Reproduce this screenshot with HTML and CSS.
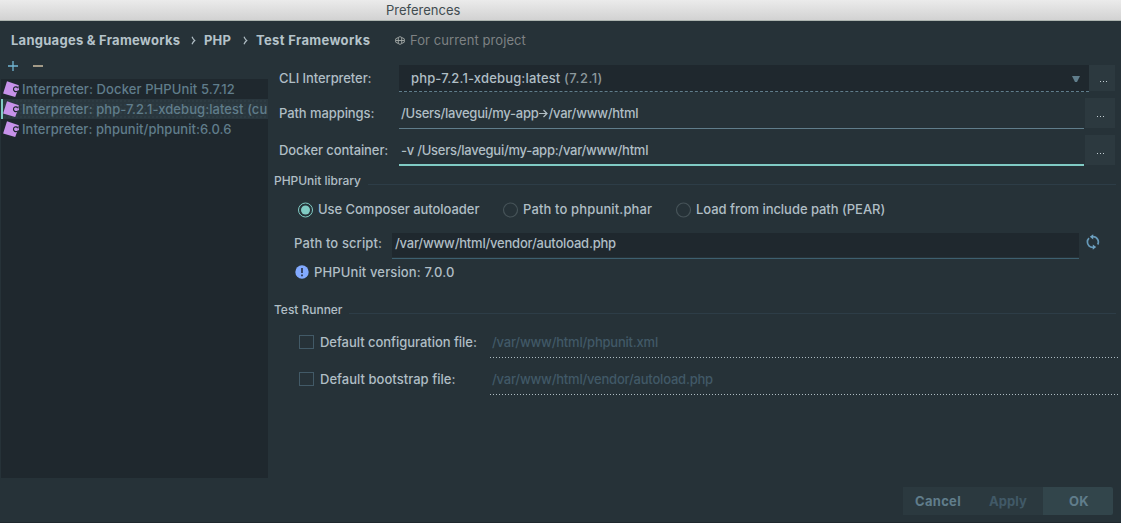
FILE: index.html
```html
<!DOCTYPE html>
<html lang="en">
<head>
<meta charset="utf-8">
<title>Preferences</title>
<link rel="stylesheet" href="styles.css">
</head>
<body>
<svg width="0" height="0" class="defs" aria-hidden="true">
  <symbol id="tag" viewBox="0 0 16 16">
    <path d="M4 .2 15.800 4.200 15.300 6.200 14.200 5.800 11 6v4.300l3.200.2L12.200 16 .1 12.600z" fill="#c792ea"/>
    <path d="M14.800 6.400c-2.200-1.300-4.300-.2-4.300 1.800s2 3.100 4 2.100" fill="#c792ea" stroke="#1f282e" stroke-width="1.200"/>
    <path d="M15.800 6.500v2.300h-2.600" fill="none" stroke="#c792ea" stroke-width="1.100"/>
  </symbol>
</svg>
<div class="window">
  <header class="titlebar"><span>Preferences</span></header>
  <nav class="crumbs">
    <b class="c1">Languages &amp; Frameworks</b>
    <svg class="chev" viewBox="0 0 5 9"><path d="M1 .7q1.2 2.7 2.7 3.800Q2.200 5.600 1 8.300"/></svg>
    <b class="c2">PHP</b>
    <svg class="chev" viewBox="0 0 5 9"><path d="M1 .7q1.2 2.7 2.7 3.800Q2.200 5.600 1 8.300"/></svg>
    <b class="c3">Test Frameworks</b>
    <svg class="scope" viewBox="0 0 10 9"><path d="M5 .6 9.300 2.800v3.400L5 8.400.7 6.200V2.800zM.7 4.500h8.600M3.300 1.800v5.400M6.700 1.800v5.400"/></svg>
    <span class="project">For current project</span>
  </nav>
  <div class="body">
    <aside class="side">
      <div class="tools">
        <svg viewBox="0 0 40 12"><path d="M0 6h10M5 1v10" stroke="#71b6d3" stroke-width="1.3"/><path d="M25 6h10" stroke="#a39b88" stroke-width="2"/></svg>
      </div>
      <div class="list">
        <div class="item"><svg><use href="#tag"/></svg><span class="i1">Interpreter: Docker PHPUnit 5.7.12</span></div>
        <div class="item selected"><svg><use href="#tag"/></svg><span class="i2">Interpreter: php-7.2.1-xdebug:latest (cu</span></div>
        <div class="item"><svg><use href="#tag"/></svg><span class="i3">Interpreter: phpunit/phpunit:6.0.6</span></div>
      </div>
    </aside>
    <main class="main">
      <div class="row cli"><label class="l1">CLI Interpreter:</label>
        <div class="combo"><span class="php">php-7.2.1-xdebug:latest <i>(7.2.1)</i></span><svg class="arrow" viewBox="0 0 8 6"><path d="M0 0h8L5 6H3z"/></svg></div>
        <div class="more"><i></i><i></i><i></i></div></div>
      <div class="row map"><label class="l2">Path mappings:</label>
        <div class="line"><span class="mapping">/Users/lavegui/my-app<svg viewBox="0 0 9 9"><path d="M0 4.500h7.700M4.500 1 8 4.500 4.500 8"/></svg>/var/www/html</span></div>
        <div class="more"><i></i><i></i><i></i></div></div>
      <div class="row docker"><label class="l3">Docker container:</label>
        <div class="line focus"><span class="volume">-v /Users/lavegui/my-app:/var/www/html</span></div>
        <div class="more"><i></i><i></i><i></i></div></div>

      <div class="section lib"><span class="s1">PHPUnit library</span><hr></div>
      <div class="radios">
        <div class="opt o1"><svg viewBox="0 0 16 16"><circle cx="8.500" cy="8" r="7" fill="none" stroke="#80cbc4"/><circle cx="8.500" cy="8" r="4.500" fill="#80cbc4"/></svg><span class="r1">Use Composer autoloader</span></div>
        <div class="opt o2"><svg viewBox="0 0 16 16"><circle cx="8.500" cy="8" r="7" fill="none" stroke="#465358" stroke-width="1.200"/></svg><span class="r2">Path to phpunit.phar</span></div>
        <div class="opt"><svg viewBox="0 0 16 16"><circle cx="8.500" cy="8" r="7" fill="none" stroke="#465358" stroke-width="1.200"/></svg><span class="r3">Load from include path (PEAR)</span></div>
      </div>
      <div class="script"><label class="l4">Path to script:</label>
        <div class="scriptfield"><span class="autoload">/var/www/html/vendor/autoload.php</span></div>
        <svg class="refresh" viewBox="0 0 14 16"><g fill="none" stroke="#6699b8" stroke-width="1.700"><path d="M3 11.800A5.300 5.300 0 0 1 3 4.200M7 2.700a5.300 5.300 0 0 1 4.700 7.800M7 13.300a5.300 5.300 0 0 1-4-1.500"/></g><path d="M7.200.2v5.300L3.800 2.800zM6.800 10.500v5.300l3.400-2.700z" fill="#6fa3c3"/></svg>
      </div>
      <div class="version"><svg viewBox="0 0 14 14"><circle cx="7" cy="7" r="6.700" fill="#82aaff"/><path d="M7 3v5M7 9.400v1.800" stroke="#303a55" stroke-width="1.800"/></svg><span class="v">PHPUnit version: 7.0.0</span></div>

      <div class="section runner"><span class="s2">Test Runner</span><hr></div>
      <div class="check k1"><i class="box"></i><label class="d1">Default configuration file:</label><div class="dotted"><span class="p1">/var/www/html/phpunit.xml</span></div></div>
      <div class="check k2"><i class="box"></i><label class="d2">Default bootstrap file:</label><div class="dotted"><span class="p2">/var/www/html/vendor/autoload.php</span></div></div>
    </main>
  </div>
  <footer class="buttons"><button class="cancel">Cancel</button><button class="apply">Apply</button><button class="ok">OK</button></footer>
</div>
</body>
</html>
```
FILE: styles.css
```css
* { box-sizing: border-box; }
body { margin: 0; overflow: hidden; background: #263238; color: #b0bec5; font: 500 13px/20px Inter, "Liberation Sans", sans-serif; }
.defs { display: block; height: 0; }
svg { display: block; flex: none; }
span, label, b { white-space: pre; }
i { font-style: normal; }
.window { width: 1121px; height: 523px; display: flex; flex-direction: column; border-bottom: 1px solid #1e272d; }
.titlebar { height: 21px; flex: none; padding-left: 386px; font-weight: 400; line-height: 21px; color: #414c50; background: linear-gradient(#ebebeb, #d2d2d2); border-bottom: 1px solid #adb5b0; }
.crumbs { height: 38px; flex: none; display: flex; align-items: center; padding-left: 11px; }
.crumbs b { font-weight: 700; color: #b5c3ca; }
.c1 { width: 180px; letter-spacing: .26px; }
.c2 { width: 38px; letter-spacing: .2px; }
.c3 { width: 139px; letter-spacing: .34px; }
.chev { width: 5px; height: 9px; fill: none; stroke: #b0bec5; stroke-width: 1.2; margin-right: 8px; }
.c2 + .chev { margin-left: 1px; }
.scope { width: 10px; height: 9px; margin-right: 5px; fill: none; stroke: #a5aaa8; stroke-width: .9; }
.project { color: #7e8284; font-weight: 400; letter-spacing: .08px; }

/* Tracking of the individual labels */
.i1 { letter-spacing: .1px; }
.i2 { letter-spacing: .07px; }
.i3 { letter-spacing: .05px; }
.l1, .l2, .l3 { letter-spacing: -.08px; }
.php { letter-spacing: .16px; }
.php i { letter-spacing: .45px; }
.mapping { letter-spacing: -.26px; }
.volume { letter-spacing: -.26px; }
.r1, .r3 { letter-spacing: -.04px; }
.r2 { letter-spacing: .14px; }
.l4 { letter-spacing: .11px; }
.v { letter-spacing: .13px; }
.s1, .s2 { letter-spacing: -.03px; }
.autoload { letter-spacing: -.21px; }
.d1 { letter-spacing: -.04px; }
.d2 { letter-spacing: .03px; }
.p1 { letter-spacing: -.21px; }
.p2 { letter-spacing: -.21px; }

.body { display: flex; flex: 1; min-height: 0; }
.side { width: 268px; padding-left: 1px; flex: none; }
.tools { height: 20px; padding: 1px 0 0 7px; }
.tools svg { width: 40px; height: 12px; }
.list { height: 399px; background: #1f282e; overflow: hidden; color: #607d8b; }
.item { height: 20px; display: flex; align-items: center; padding-left: 2px; }
.item svg { width: 16px; height: 16px; margin-right: 3px; }
.selected { padding-left: 0; border-left: 2px solid #80cbc4; background: radial-gradient(circle, #31424a 0.6px, transparent 0.8px) 0 0 / 4px 4px, #2a373e; }
.main { flex: 1; min-width: 0; padding: 6px 3px 0 6px; }
.row { display: flex; padding-right: 3px; }
.row label { width: 125px; padding-left: 5px; flex: none; }
.combo { flex: 1; display: flex; justify-content: space-between; padding: 3px 9px 0 12px; background: #1f282e; border-bottom: 1px dashed #607d8b; }
.combo i { color: #8d989c; }
.arrow { width: 8px; height: 6px; margin-top: 8px; fill: #607d8b; }
.cli { height: 27px; }
.cli label { padding-top: 3px; }
.map, .docker { height: 31px; margin-top: 6px; }
.map label, .docker label, .line { padding-top: 5px; }
.line { flex: 1; padding-left: 2px; margin-right: 1px; border-bottom: 1px solid #607d8b; }
.mapping svg { display: inline-block; width: 9px; height: 9px; margin: 0 0 0 1px; fill: none; stroke: #b0bec5; stroke-width: 1.2; }
.focus { border-bottom: 2px solid #80cbc4; }
.more { width: 30px; height: 30px; display: flex; justify-content: center; gap: 2px; padding-top: 18px; background: radial-gradient(circle, #30424a 0.5px, transparent 0.7px) 0 0 / 4px 4px, #2c393f; }
.more i { width: 1px; height: 1px; background: #c3ced3; }
.cli .more { width: 26px; height: 26px; padding: 16px 0 0 2px; }
.section { height: 20px; display: flex; align-items: center; font-size: 12px; }
.section hr { flex: 1; height: 1px; border: 0; margin: 7px 2px 0 7px; background: #2d3d47; }
.lib { margin-top: 5px; }
.radios { height: 20px; margin-top: 9px; padding-left: 23px; display: flex; }
.opt { display: flex; align-items: center; }
.opt svg { width: 16px; height: 16px; margin-right: 5px; overflow: visible; }
.opt span { margin-top: -2px; }
.o1 { width: 205px; }
.o2 { width: 173px; }
.script { display: flex; height: 26px; margin-top: 13px; padding-left: 20px; }
.script label { width: 98px; }
.scriptfield { width: 687px; height: 26px; padding-left: 3px; background: linear-gradient(#1f282e, #1f282e) 0 0 / 100% 24px no-repeat; border-bottom: 1px solid #3d5f6f; }
.refresh { width: 14px; height: 16px; margin: 1px 0 0 7px; }
.version { height: 20px; display: flex; align-items: center; margin-top: 3px; padding-left: 21px; }
.version svg { width: 14px; height: 14px; margin-right: 5px; }
.runner { margin-top: 18px; }
.check { height: 37px; display: flex; padding-left: 25px; }
.k1 { margin-top: 12px; }
.box { width: 15px; height: 14px; margin: 3px 6px 0 0; border: 1px solid #425a67; }
.check label { width: 170px; }
.dotted { flex: 1; height: 26px; padding-left: 2px; color: #415967; background: repeating-linear-gradient(90deg, #aebcc2 0 1px, transparent 1px 3px) 0 25px / 100% 1px no-repeat; }
.buttons { height: 35px; flex: none; display: flex; justify-content: flex-end; padding: 0 8px 7px 0; }
.buttons button { height: 28px; width: 70px; border: 0; padding: 0; font: 700 13px Inter, sans-serif; letter-spacing: .3px; color: #607d8b; background: radial-gradient(circle, #31444a 0.5px, transparent 0.7px) 0 0 / 4px 4px, #2b393f; }
.buttons .apply { color: #415967; letter-spacing: .1px; }
.buttons .ok { background: #32454b; border-radius: 0 2px 2px 0; padding-left: 2px; }
```
